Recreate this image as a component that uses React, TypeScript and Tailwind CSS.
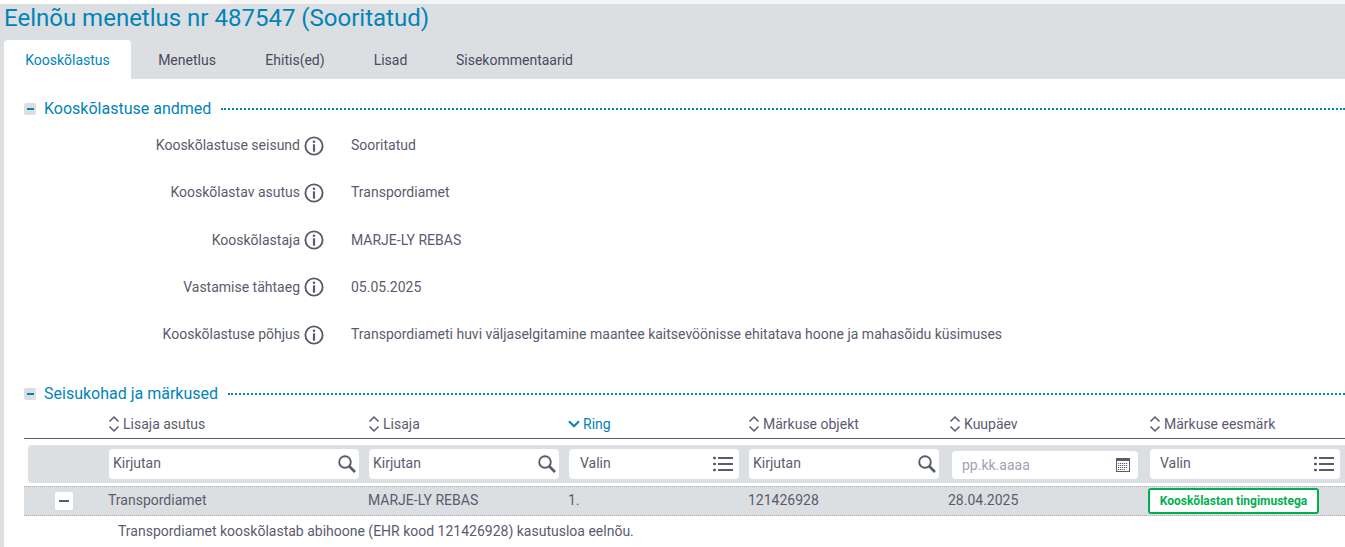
import React from "react";
import { ChevronDown } from "lucide-react";

const Info = () => (
  <svg width="20" height="20" viewBox="0 0 20 20" fill="none" className="shrink-0">
    <circle cx="10" cy="10" r="8.6" stroke="#5b5b6e" strokeWidth="1.9" />
    <circle cx="10" cy="5.8" r="1.3" fill="#5b5b6e" />
    <rect x="8.9" y="8.3" width="2.2" height="7.4" fill="#5b5b6e" />
  </svg>
);

const Sort = () => (
  <svg width="12" height="18" viewBox="0 0 12 18" fill="none" stroke="#5b5b6e" strokeWidth="1.5" className="shrink-0">
    <path d="M1.5 6.5 6 2l4.5 4.5" />
    <path d="M1.5 11.5 6 16l4.5-4.5" />
  </svg>
);

const Section = ({ title, lineClass }: { title: string; lineClass: string }) => (
  <div className="flex items-center h-[24px]">
    <span className="w-[12px] h-[12px] rounded-[2px] bg-[#dcdfe1] flex items-center justify-center">
      <span className="w-[7px] h-[2px] bg-[#0084b8]" />
    </span>
    <span className="ml-[8px] text-[16px] text-[#0084b8]">{title}</span>
    <span className={`flex-1 h-0 border-t-2 border-dotted border-[#0084b8] ${lineClass}`} />
  </div>
);

const rows = [
  ["Kooskõlastuse seisund", "Sooritatud"],
  ["Kooskõlastav asutus", "Transpordiamet"],
  ["Kooskõlastaja", "MARJE-LY REBAS"],
  ["Vastamise tähtaeg", "05.05.2025"],
  ["Kooskõlastuse põhjus", "Transpordiameti huvi väljaselgitamine maantee kaitsevöönisse ehitatava hoone ja mahasõidu küsimuses"],
];

const Head = ({ label, w, active }: { label: string; w: string; active?: boolean }) => (
  <div className={`flex items-center gap-[3px] ${w}`}>
    {active ? (
      <ChevronDown size={18} strokeWidth={2.6} color="#0084b8" className="-ml-[3px] -mr-[3px]" />
    ) : (
      <Sort />
    )}
    <span className={active ? "text-[#0084b8]" : ""}>{label}</span>
  </div>
);

const Field = ({ w, text, icon, pad = "pl-[4px]" }: { w: string; text: string; icon: React.ReactNode; pad?: string }) => (
  <div className={`flex items-center justify-between h-[30px] bg-white rounded-[4px] pr-[3px] ${pad} ${w}`}>
    <span className="pb-[2px]">{text}</span>
    {icon}
  </div>
);

const SearchIcon = () => (
  <svg width="18" height="18" viewBox="0 0 18 18" fill="none" stroke="#5b5b6e">
    <circle cx="7" cy="7" r="5.8" strokeWidth="1.9" />
    <path d="M11 11 17 17" strokeWidth="2.7" />
  </svg>
);

const ListIcon = () => (
  <svg width="20" height="16" viewBox="0 0 20 16" fill="#5b5b6e" className="mr-[3px]">
    <rect x="0" y="0.8" width="3" height="2.4" rx="1" />
    <rect x="0" y="6.8" width="3" height="2.4" rx="1" />
    <rect x="0" y="12.8" width="3" height="2.4" rx="1" />
    <rect x="5" y="1" width="15" height="2" />
    <rect x="5" y="7" width="15" height="2" />
    <rect x="5" y="13" width="15" height="2" />
  </svg>
);

const Calendar = () => (
  <svg width="16" height="16" viewBox="0 0 16 16" className="mr-[7px]" fill="none">
    <rect x="1.5" y="1.5" width="13" height="13" stroke="#5b5b6e" />
    <rect x="1" y="1" width="14" height="3" fill="#5b5b6e" />
    <path d="M3 6.5h10M3 8.5h10M3 10.5h10M3 12.5h7" stroke="#5b5b6e" strokeDasharray="1.2 0.8" />
  </svg>
);

export default function App() {
  return (
    <div className="h-[547px] overflow-hidden bg-white text-[14px] text-[#5b5b6e] font-['Roboto',sans-serif]">
      <div className="h-[4px] flex">
        <div className="w-[230px] bg-white" />
        <div className="flex-1 bg-[#f5f5f5]" />
      </div>
      <header className="h-[75px] bg-[#dcdfe1] flex flex-col pl-[4px]">
        <h1 className="h-[36px] text-[24px] leading-[28px] text-[#0084b8]">Eelnõu menetlus nr 487547 (Sooritatud)</h1>
        <nav className="flex h-[39px] items-center">
          <div className="h-[39px] w-[127px] flex items-center justify-center bg-white rounded-t-[4px] text-[#0084b8] pt-[1px]">Kooskõlastus</div>
          <div className="flex justify-center w-[112px] text-[#4a4a5e] pt-[2px]">Menetlus</div>
          <div className="flex justify-center w-[104px] text-[#4a4a5e] pt-[2px]">Ehitis(ed)</div>
          <div className="flex justify-center w-[87px] text-[#4a4a5e] pt-[2px]">Lisad</div>
          <div className="flex justify-center w-[161px] text-[#4a4a5e] pt-[2px]">Sisekommentaarid</div>
        </nav>
      </header>
      <main className="border-l-[4px] border-[#dcdfe1] h-[468px] pl-[20px] pt-[18px]">
        <Section title="Kooskõlastuse andmed" lineClass="ml-[10px]" />
        <div className="mt-[1px]">
          {rows.map(([k, v]) => (
            <div key={k} className="flex items-center h-[47.25px]">
              <div className="w-[276px] text-right shrink-0">{k}</div>
              <div className="ml-[4px]"><Info /></div>
              <div className="ml-[27px]">{v}</div>
            </div>
          ))}
        </div>
        <div className="mt-[24px]"><Section title="Seisukohad ja märkused" lineClass="ml-[10px]" /></div>
        <div className="flex items-center h-[28px] border-b border-[#5b5b6e] pl-[84px] mt-[5px] pb-[1px]">
          <Head label="Lisaja asutus" w="w-[260px]" />
          <Head label="Lisaja" w="w-[200px]" />
          <Head label="Ring" w="w-[180px]" active />
          <Head label="Märkuse objekt" w="w-[201px]" />
          <Head label="Kuupäev" w="w-[200px]" />
          <Head label="Märkuse eesmärk" w="w-[190px]" />
        </div>
        <div className="flex items-center h-[38px] mt-[6px] ml-[4px] bg-[#dcdfe1] rounded-l-[4px] pl-[81px] gap-[10px]">
          <Field w="w-[250px]" text="Kirjutan" icon={<SearchIcon />} />
          <Field w="w-[190px]" text="Kirjutan" icon={<SearchIcon />} />
          <Field w="w-[170px]" text="Valin" icon={<ListIcon />} pad="pl-[11px]" />
          <Field w="w-[190px]" text="Kirjutan" icon={<SearchIcon />} />
          <div className="ml-[3px] mt-[2px] flex items-center justify-between h-[28px] w-[186px] bg-white rounded-[4px] pl-[10px] text-[#9ca3b4]">
            pp.kk.aaaa
            <Calendar />
          </div>
          <div className="ml-[2px]">
            <Field w="w-[190px]" text="Valin" icon={<ListIcon />} pad="pl-[10px]" />
          </div>
        </div>
        <div className="flex items-center h-[30px] mt-[3px] bg-[#dcdfe1] border-y border-dotted border-[#a9adb3]">
          <div className="w-[84px] pl-[31px] shrink-0">
            <span className="w-[18px] h-[18px] bg-white rounded-[2px] flex items-center justify-center">
              <span className="w-[10px] h-[2px] bg-[#5b5b6e]" />
            </span>
          </div>
          <div className="w-[260px] pb-[2px]">Transpordiamet</div>
          <div className="w-[200px] pb-[2px]">MARJE-LY REBAS</div>
          <div className="w-[180px] pb-[2px]">1.</div>
          <div className="w-[200px] pb-[2px]">121426928</div>
          <div className="w-[200px] pb-[2px]">28.04.2025</div>
          <div className="w-[171px] h-[26px] rounded-[3px] border-2 border-[#00b050] bg-white flex items-center justify-center text-[12px] font-bold text-[#00b050]">Kooskõlastan tingimustega</div>
        </div>
        <div className="pl-[94px] mt-[5px]">Transpordiamet kooskõlastab abihoone (EHR kood 121426928) kasutusloa eelnõu.</div>
      </main>
    </div>
  );
}
